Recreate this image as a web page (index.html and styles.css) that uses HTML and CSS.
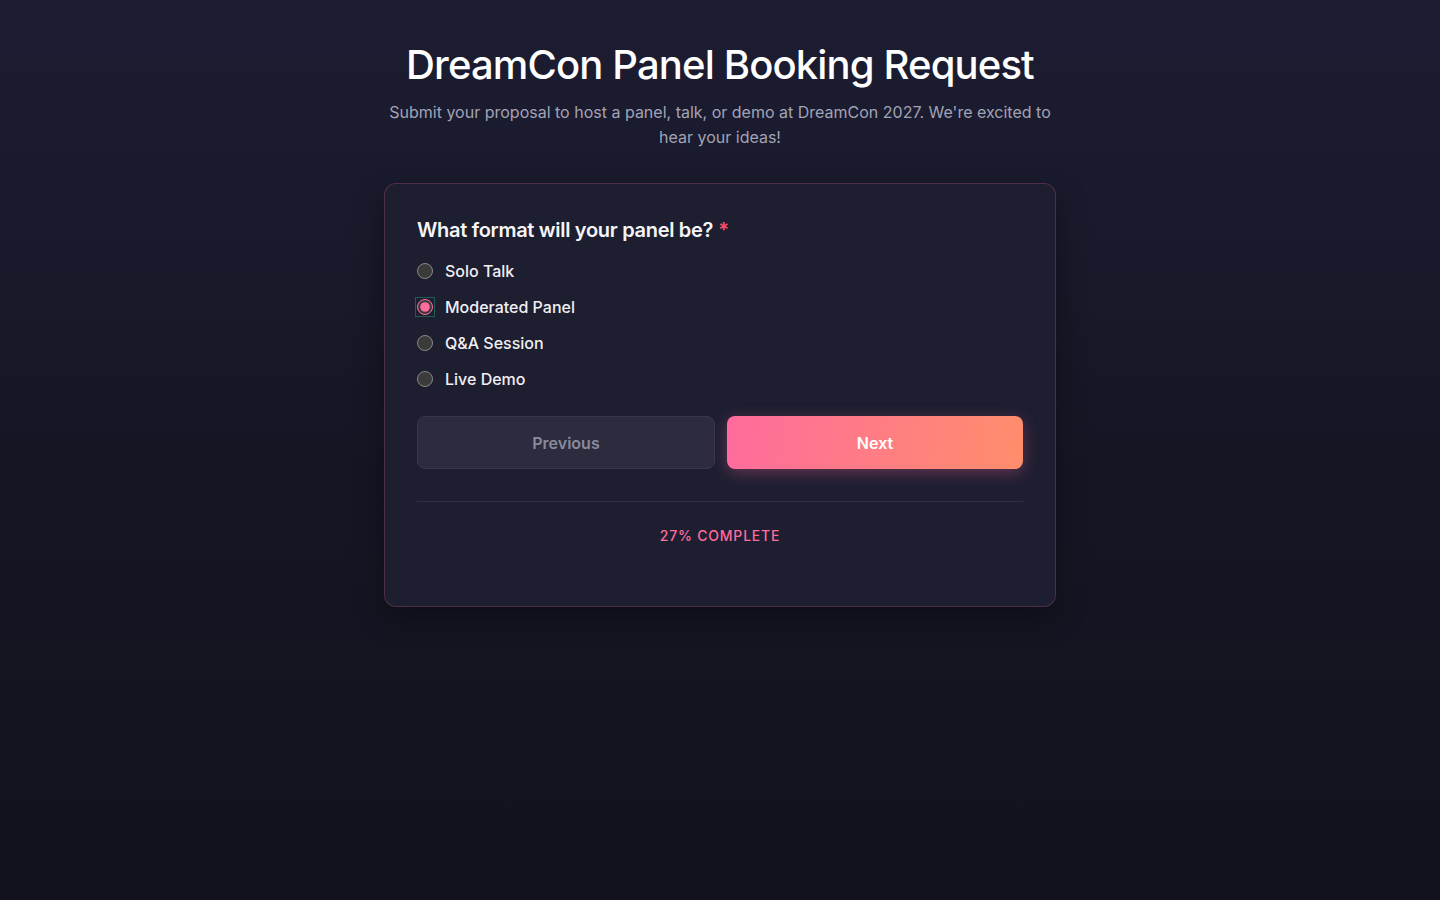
FILE: index.html
```html
<!DOCTYPE html>
<html lang="en">
<head>
<meta charset="utf-8">
<title>DreamCon Panel Booking Request</title>
<link rel="stylesheet" href="styles.css">
</head>
<body>
<main class="page">
  <header class="intro">
    <h1 class="title">DreamCon Panel Booking Request</h1>
    <p class="subtitle">Submit your proposal to host a panel, talk, or demo at DreamCon 2027. We're excited to hear your ideas!</p>
  </header>
  <section class="card">
    <div class="question" role="radiogroup" aria-labelledby="q-format">
      <div class="question-label" id="q-format">What format will your panel be?<span class="required">*</span></div>
      <label class="option"><input type="radio" name="format" class="radio"><span>Solo Talk</span></label>
      <label class="option"><input type="radio" name="format" class="radio radio-focus" checked><span>Moderated Panel</span></label>
      <label class="option"><input type="radio" name="format" class="radio"><span>Q&amp;A Session</span></label>
      <label class="option"><input type="radio" name="format" class="radio"><span>Live Demo</span></label>
    </div>
    <div class="actions">
      <button type="button" class="btn btn-prev">Previous</button>
      <button type="button" class="btn btn-next">Next</button>
    </div>
    <div class="progress">27% COMPLETE</div>
  </section>
</main>
</body>
</html>
```

FILE: styles.css
```css
* { box-sizing: border-box; }
html, body {
  margin: 0;
  min-height: 100%;
}
body {
  font-family: Inter, "Noto Sans", sans-serif;
  color: #ffffff;
  background: linear-gradient(180deg, #1c1d32 0%, #161726 45%, #11121b 100%);
  min-height: 900px;
  color-scheme: dark;
}
.page {
  width: 672px;
  margin: 0 auto;
  padding-top: 41px;
}
.intro {
  text-align: center;
}
.title {
  margin: 0;
  font-size: 40px;
  line-height: 48px;
  font-weight: 500;
  letter-spacing: -0.85px;
  color: #ffffff;
}
.subtitle {
  margin: 11px 0 0;
  font-size: 16px;
  line-height: 25px;
  color: #a3a3b5;
}
.card {
  margin-top: 33px;
  background: #1e1e31;
  border: 1px solid rgba(255, 107, 157, 0.22);
  border-radius: 12px;
  padding: 32px 32px 60px;
  box-shadow: 0 10px 30px rgba(0, 0, 0, 0.35);
}
.question {
  display: flex;
  flex-direction: column;
  gap: 12px;
}
.question-label {
  font-size: 20px;
  line-height: 28px;
  font-weight: 600;
  letter-spacing: -0.3px;
  color: #f5f5f8;
  margin-bottom: 3px;
}
.required {
  color: #ff4d6a;
  margin-left: 5px;
}
.option {
  display: flex;
  align-items: center;
  gap: 12px;
  font-size: 16px;
  line-height: 24px;
  font-weight: 500;
  color: #f0f0f4;
  cursor: pointer;
}
.radio {
  margin: 0;
  width: 16px;
  height: 16px;
  accent-color: #ff6b9d;
}
.radio-focus {
  outline: 1px solid #1f5a55;
  outline-offset: 1px;
}
.actions {
  display: flex;
  gap: 12px;
  margin-top: 25px;
}
.btn {
  flex: 1;
  height: 53px;
  border-radius: 8px;
  font-family: Inter, "Noto Sans", sans-serif;
  font-size: 16px;
  font-weight: 600;
  cursor: pointer;
}
.btn-prev {
  background: #2c2c3e;
  border: 1px solid #37374a;
  color: #8a8a9b;
}
.btn-next {
  border: 0;
  color: #ffffff;
  background: linear-gradient(100deg, #ff6b9d 0%, #ff8e6b 100%);
  box-shadow: 0 4px 16px rgba(255, 107, 157, 0.3);
}
.progress {
  margin-top: 32px;
  border-top: 1px solid #303045;
  padding-top: 24px;
  text-align: center;
  font-size: 14px;
  line-height: 20px;
  font-weight: 500;
  letter-spacing: 0.8px;
  color: #ff6b9d;
}
```
